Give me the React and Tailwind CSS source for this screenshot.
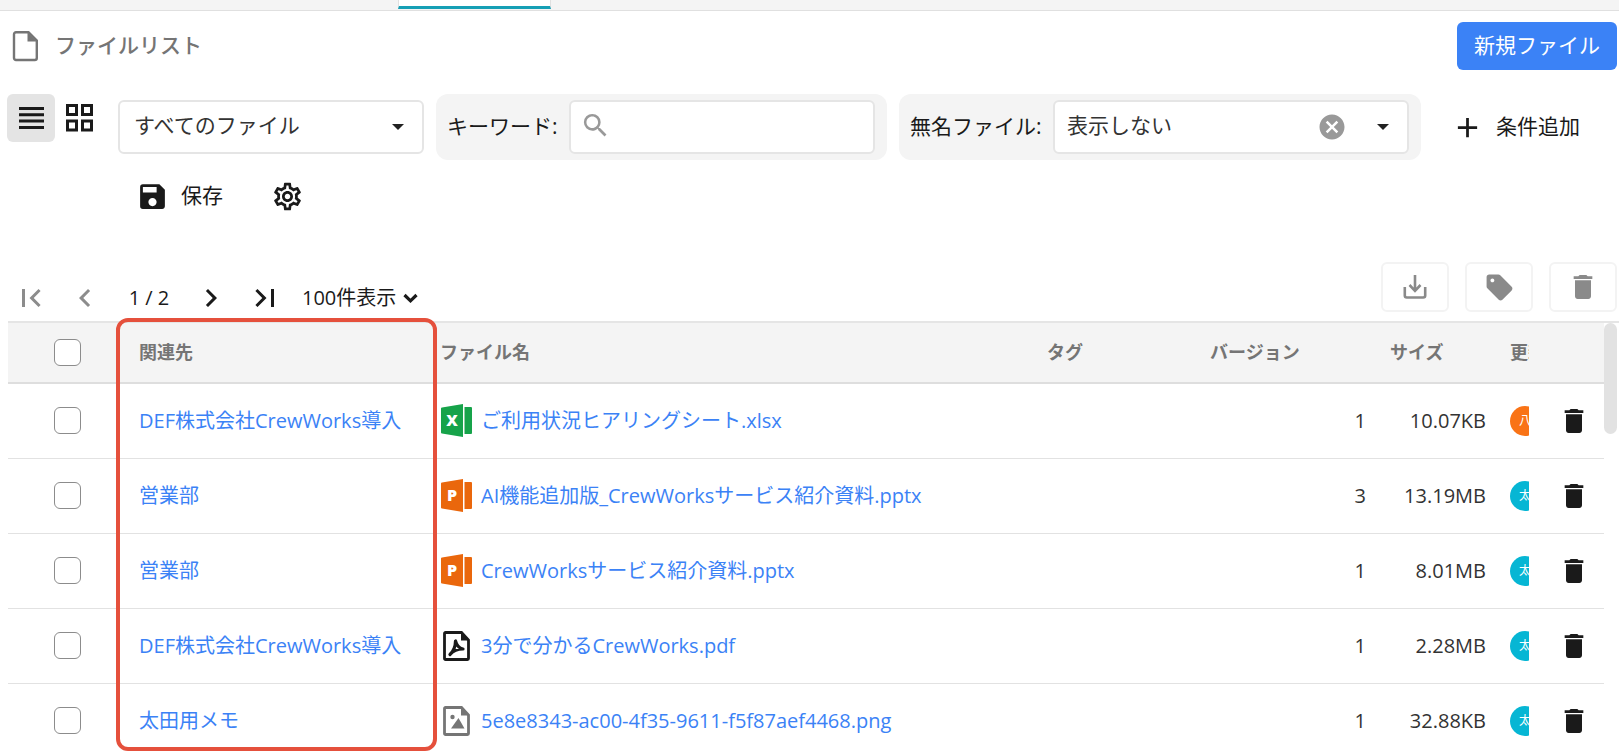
import {
  MdAdd, MdCancel, MdChevronLeft, MdChevronRight, MdDelete, MdFirstPage,
  MdLastPage, MdOutlineSettings, MdSave, MdSearch, MdSell,
} from 'react-icons/md';

const FILES = [
  { related: 'DEF株式会社CrewWorks導入', type: 'xlsx', name: 'ご利用状況ヒアリングシート.xlsx', version: 1, size: '10.07KB', user: '八' },
  { related: '営業部', type: 'pptx', name: 'AI機能追加版_CrewWorksサービス紹介資料.pptx', version: 3, size: '13.19MB', user: '太' },
  { related: '営業部', type: 'pptx', name: 'CrewWorksサービス紹介資料.pptx', version: 1, size: '8.01MB', user: '太' },
  { related: 'DEF株式会社CrewWorks導入', type: 'pdf', name: '3分で分かるCrewWorks.pdf', version: 1, size: '2.28MB', user: '太' },
  { related: '太田用メモ', type: 'png', name: '5e8e8343-ac00-4f35-9611-f5f87aef4468.png', version: 1, size: '32.88KB', user: '太' },
];

const AVATAR_COLORS = {
  八: 'bg-[#f97316]',
  太: 'bg-[#06b6d4]',
};

function OfficeIcon({ color, letter }) {
  return (
    <svg width="31" height="33" viewBox="0 0 31 33" className="shrink-0" aria-hidden="true">
      <path d="M1 3.5 22 0v33L1 29.5a1 1 0 0 1-1-1v-24a1 1 0 0 1 1-1z" fill={color} />
      <path d="M23.5 3H30a1 1 0 0 1 1 1v25a1 1 0 0 1-1 1h-6.5z" fill={color} />
      <text x="11" y="22" textAnchor="middle" fontSize="16" fontWeight="800" fill="#fff" fontFamily="Open Sans, sans-serif">{letter}</text>
    </svg>
  );
}

// Folded-corner sheet shared by the pdf and image types
function SheetIcon({ children, className }) {
  return (
    <svg width="27" height="30" viewBox="0 0 27 30" fill="none" className={className} aria-hidden="true">
      <path d="M2.5 1.5h16l7 7.5v18.500a1 1 0 0 1-1 1h-22a1 1 0 0 1-1-1v-25a1 1 0 0 1 1-1z" stroke="currentColor" strokeWidth="2.8" />
      <path d="M18 1v8.5h8z" fill="currentColor" />
      {children}
    </svg>
  );
}

function FileTypeIcon({ type }) {
  switch (type) {
    case 'xlsx':
      return <OfficeIcon color="#16a34a" letter="X" />;
    case 'pptx':
      return <OfficeIcon color="#ea670c" letter="P" />;
    case 'pdf':
      return (
        <SheetIcon className="mx-0.5 shrink-0 text-[#1a1a1a]">
          <path d="M12.500 10c0 5-2 10-5.500 13.500M12.500 10c1 4 4 7.500 7.500 8M7 23.500c3-3.500 8-5.500 13-5.500" stroke="currentColor" strokeWidth="3.2" strokeLinecap="round" />
        </SheetIcon>
      );
    default:
      return (
        <SheetIcon className="mx-0.5 shrink-0 text-[#757575]">
          <circle cx="9.5" cy="11" r="2.2" fill="currentColor" />
          <path d="M8 22.5 15.5 12l6 10.5z" fill="currentColor" />
        </SheetIcon>
      );
  }
}

function Caret({ className }) {
  return (
    <svg width="12" height="6" viewBox="0 0 12 6" className={className} aria-hidden="true">
      <path d="M0 0h12L6 6z" fill="#222" />
    </svg>
  );
}

function CheckBox({ label }) {
  return (
    <input
      type="checkbox"
      aria-label={label}
      className="mx-auto block size-[27px] appearance-none rounded-md border border-[#8c8c8c] bg-white checked:bg-[#3b82f6]"
    />
  );
}

function TopBar() {
  return (
    <>
      <div className="flex h-[11px] border-b border-[#e0e0e0] bg-[#f4f4f4] pl-[398px]">
        <div className="h-[9px] w-[153px] border-x border-b-[3px] border-x-[#e0e0e0] border-b-[#159fb5] bg-white" />
      </div>
      <header className="mt-[11px] flex items-center justify-between pl-3 pr-0.5">
        <div className="flex items-center gap-4 text-[#757575]">
          <svg width="27" height="32" viewBox="0 0 27 32" fill="none" aria-hidden="true">
            <path d="M4 2.2h12.500L24.8 10.500V28a2 2 0 0 1-2 2H4a2 2 0 0 1-2-2V4.200a2 2 0 0 1 2-2z" stroke="currentColor" strokeWidth="2.4" />
            <path d="M15.5 2v9.5H25z" fill="currentColor" />
          </svg>
          <h1 className="text-[21px] font-medium">ファイルリスト</h1>
        </div>
        <button className="h-12 rounded-md bg-[#3b82f6] px-[17px] text-[21px] text-white">新規ファイル</button>
      </header>
    </>
  );
}

function Filters() {
  return (
    <div className="mt-6 flex text-[21px]">
      <div className="flex shrink-0 pl-[7px]">
        <button aria-label="リスト表示" className="flex size-12 items-center justify-center rounded-md bg-[#e4e4e4]">
          <svg width="25" height="22" viewBox="0 0 25 22" fill="#1a1a1a" aria-hidden="true">
            <path d="M0 0h25v3H0zM0 6.3h25v3H0zM0 12.6h25v3H0zM0 19h25v3H0z" />
          </svg>
        </button>
        <button aria-label="グリッド表示" className="flex size-12 items-center justify-center">
          <svg width="27" height="28" viewBox="0 0 27 28" fill="none" stroke="#1a1a1a" strokeWidth="3" aria-hidden="true">
            <path d="M1.5 1.5h9v9h-9zM16.5 1.5h9v9h-9zM1.5 17h9v9h-9zM16.5 17h9v9h-9z" />
          </svg>
        </button>
      </div>

      <div className="ml-[15px] flex flex-1 flex-wrap items-center gap-3">
        <div className="relative">
          <select aria-label="ファイル種別" className="block h-[54px] w-[306px] appearance-none rounded-md border-2 border-[#e5e5e5] bg-white px-3.5 pb-0.5 text-[#333]">
            <option>すべてのファイル</option>
          </select>
          <Caret className="pointer-events-none absolute right-5 top-6" />
        </div>

        <div className="flex h-[66px] items-center rounded-xl bg-[#f4f4f4] pl-[11px] pr-3">
          <label htmlFor="keyword" className="w-[122px] whitespace-nowrap">キーワード:</label>
          <div className="relative">
            <MdSearch size={31} className="pointer-events-none absolute left-[11px] top-[10px] text-[#999]" />
            <input id="keyword" type="text" className="block h-[54px] w-[306px] rounded-md border-2 border-[#e5e5e5] bg-white pl-12 pr-3 outline-none" />
          </div>
        </div>

        <div className="flex h-[66px] items-center rounded-xl bg-[#f4f4f4] pl-[11px] pr-3">
          <label htmlFor="unnamed" className="w-[143px] whitespace-nowrap">無名ファイル:</label>
          <div className="relative">
            <select id="unnamed" className="block h-[54px] w-[356px] appearance-none rounded-md border-2 border-[#e5e5e5] bg-white px-3 pb-0.5 text-[#333]">
              <option>表示しない</option>
            </select>
            <button aria-label="クリア" className="absolute right-[62px] top-3 text-[#999]">
              <MdCancel size={30} />
            </button>
            <Caret className="pointer-events-none absolute right-5 top-6" />
          </div>
        </div>

        <button className="flex h-12 items-center gap-3 whitespace-nowrap px-[18px]">
          <MdAdd size={33} />
          条件追加
        </button>

        <div className="flex w-full items-center">
          <button className="flex h-12 items-center gap-3 px-[18px]">
            <MdSave size={33} />
            保存
          </button>
          <button aria-label="設定" className="flex h-12 items-center px-[30px]">
            <MdOutlineSettings size={33} />
          </button>
        </div>
      </div>
    </div>
  );
}

function Pager() {
  return (
    <nav className="flex h-7 items-center pl-2 text-[20px]">
      <button aria-label="最初のページ" disabled className="flex w-[46px] justify-center text-[#8c8c8c]">
        <MdFirstPage size={36} />
      </button>
      <button aria-label="前のページ" disabled className="flex w-[62px] justify-center text-[#8c8c8c]">
        <MdChevronLeft size={36} />
      </button>
      <span className="w-[66px] text-center">1 / 2</span>
      <button aria-label="次のページ" className="flex w-[58px] justify-center">
        <MdChevronRight size={36} />
      </button>
      <button aria-label="最後のページ" className="flex w-[50px] justify-center">
        <MdLastPage size={36} />
      </button>
      <div className="relative ml-3">
        <select aria-label="表示件数" className="w-[116px] appearance-none bg-transparent">
          <option>100件表示</option>
        </select>
        <svg width="15" height="10" viewBox="0 0 15 10" fill="none" className="pointer-events-none absolute right-0 top-2.5" aria-hidden="true">
          <path d="M1.5 2 7.5 7.8 13.5 2" stroke="#1a1a1a" strokeWidth="3.2" />
        </svg>
      </div>
    </nav>
  );
}

function Actions() {
  const cls = 'flex h-[50px] w-[68px] items-center justify-center rounded-md border-2 border-[#f3f3f3] text-[#8a8a8a]';
  return (
    <div className="flex gap-4">
      <button aria-label="ダウンロード" className={cls}>
        <svg width="24" height="24" viewBox="0 0 24 24" fill="none" stroke="currentColor" strokeWidth="2.6" aria-hidden="true">
          <path d="M1.8 12v8.5a2 2 0 0 0 2 2h16.4a2 2 0 0 0 2-2V12M12 0v15.5M6.5 10l5.5 5.8L17.5 10" />
        </svg>
      </button>
      <button aria-label="タグ" className={cls}>
        <MdSell size={31} />
      </button>
      <button aria-label="削除" className={cls}>
        <MdDelete size={32} />
      </button>
    </div>
  );
}

function FileTable() {
  return (
    <div className="relative ml-2 mt-[9px] flex min-h-0 flex-1 border-t-2 border-[#e5e5e5]">
      <div className="min-w-0 flex-1 overflow-hidden">
        <table className="w-full table-fixed border-collapse text-[20px]">
          <colgroup>
            <col className="w-[119px]" />
            <col className="w-[313px]" />
            <col />
            <col className="w-[163px]" />
            <col className="w-[180px]" />
            <col className="w-[120px]" />
            <col className="w-[19px]" />
            <col className="w-[75px]" />
          </colgroup>
          <thead className="bg-[#f4f4f4] text-left text-[18px] text-[#757575]">
            <tr className="h-[60px] border-b-2 border-[#dedede]">
              <th><CheckBox label="すべて選択" /></th>
              <th className="pl-3 font-bold">関連先</th>
              <th className="font-bold">ファイル名</th>
              <th className="font-bold">タグ</th>
              <th className="font-bold">バージョン</th>
              <th className="font-bold">サイズ</th>
              <th className="overflow-hidden whitespace-nowrap font-bold">更新者</th>
              <th />
            </tr>
          </thead>
          <tbody>
            {FILES.map((file, i) => (
              <tr key={i} className="h-[75px] border-b border-[#e2e2e2]">
                <td><CheckBox label={`${file.name}を選択`} /></td>
                <td className="pl-3"><a href="#" className="text-[#3b82f6]">{file.related}</a></td>
                <td className="pl-px">
                  <a href="#" className="flex items-center gap-[9px] text-[#3b82f6]">
                    <FileTypeIcon type={file.type} />
                    {file.name}
                  </a>
                </td>
                <td />
                <td className="pr-6 text-right text-[#333]">{file.version}</td>
                <td className="pr-6 text-right text-[#333]">{file.size}</td>
                <td className="overflow-hidden">
                  <div className={`flex size-[30px] items-center justify-center rounded-full text-xs text-white ${AVATAR_COLORS[file.user]}`}>
                    {file.user}
                  </div>
                </td>
                <td className="pl-[29px]">
                  <button aria-label="削除" className="flex">
                    <MdDelete size={32} />
                  </button>
                </td>
              </tr>
            ))}
          </tbody>
        </table>
      </div>

      <div className="w-[15px] pr-0.5">
        <div className="h-[111px] rounded-full bg-[#e2e2e2]" />
      </div>

      {/* Red frame over the 関連先 column */}
      <div className="pointer-events-none absolute -top-[5px] left-[108px] h-[433px] w-[321px] rounded-xl border-4 border-[#e5503c]" />
    </div>
  );
}

export default function App() {
  return (
    <div className="flex h-screen flex-col overflow-hidden bg-white font-['Open_Sans','Noto_Sans_CJK_JP',sans-serif] text-[#1a1a1a]">
      <div className="shrink-0">
        <TopBar />
        <Filters />
        <div className="mt-[42px] flex items-end justify-between pr-0.5">
          <Pager />
          <Actions />
        </div>
      </div>
      <FileTable />
    </div>
  );
}
